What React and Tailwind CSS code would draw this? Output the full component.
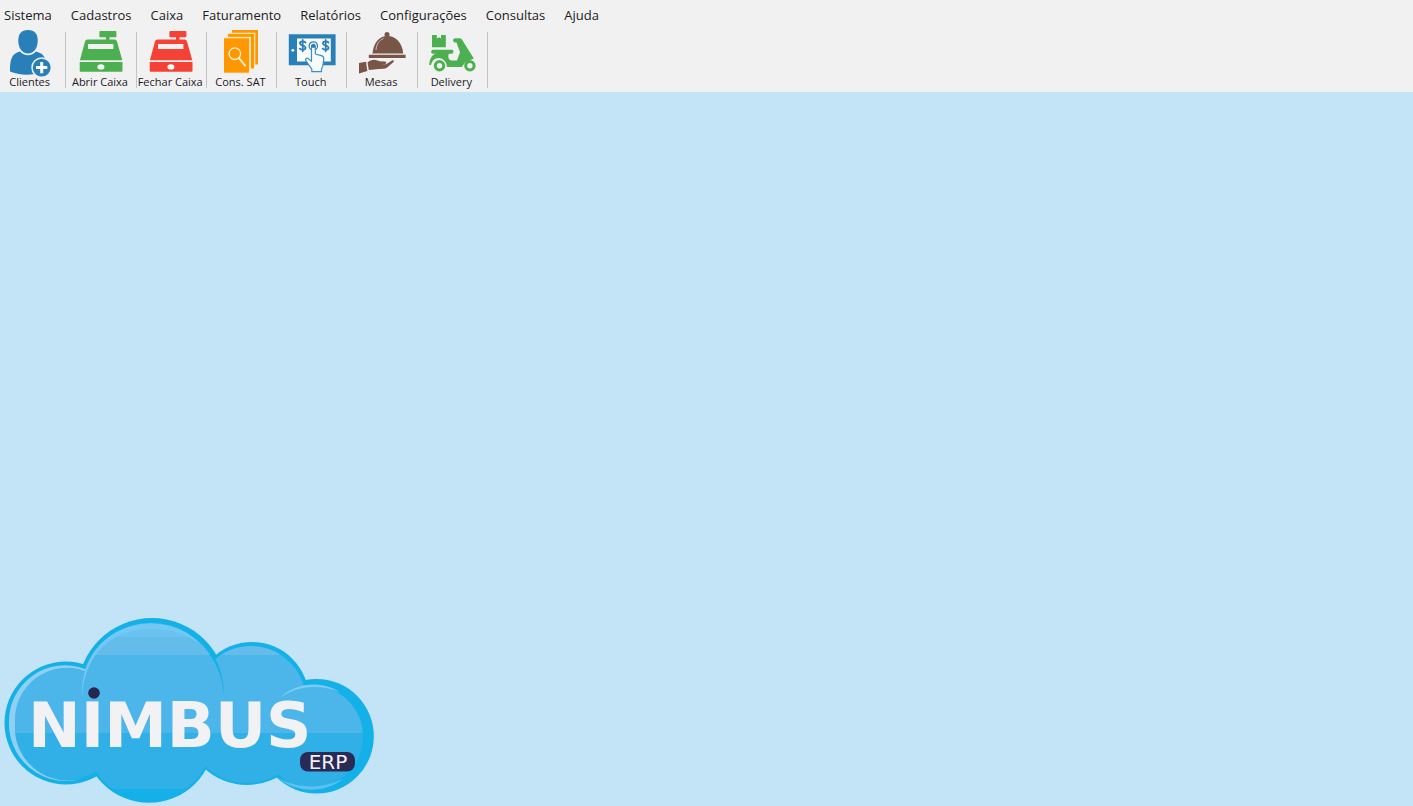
import React from "react";

const menuItems = [
  "Sistema",
  "Cadastros",
  "Caixa",
  "Faturamento",
  "Relatórios",
  "Configurações",
  "Consultas",
  "Ajuda",
];

const Icon = ({ children }) => (
  <svg
    viewBox="0 0 52 48"
    className="h-12 w-[52px] overflow-visible"
    aria-hidden="true"
  >
    {children}
  </svg>
);

const ClientIcon = () => (
  <Icon>
    <g fill="#2980b9">
      <path d="M24 2c-6.500 0-9.700 4-9.700 10.500C14.300 20 18 25.500 24 25.500S33.700 20 33.700 12.500C33.700 6 30.500 2 24 2z" />
      <path d="M16 23.500c4.500 5 11.500 5 16 0 6 1.500 9 4.500 9.500 9.500L31 46C22 47.500 13 46.500 6 43.500c0-11 1-18 10-20z" />
    </g>
    <circle cx="37.700" cy="39.600" r="9.700" fill="#2980b9" stroke="#f1f1f1" strokeWidth="1.500" />
    <path d="M37.700 34v11.200M32.100 39.600h11.200" stroke="#fff" strokeWidth="3" />
  </Icon>
);

const RegisterIcon = ({ color }) => (
  <Icon>
    <g fill={color}>
      <rect x="25.400" y="3" width="17" height="6.300" rx="1" />
      <path d="M32 9h3.500v3H32z" />
      <path
        fillRule="evenodd"
        d="M13.500 11.500h27q2 0 2.500 2L48.300 32.300H5.900L11 13.500q.5-2 2.500-2zM14 16v5h25.400v-5z"
      />
      <path d="M5.700 34h42.800v8.700q0 1-1 1H6.700q-1 0-1-1z" />
    </g>
    <ellipse cx="26.900" cy="38.900" rx="3.500" ry="2.700" fill="#f8fff8" />
  </Icon>
);

const SatIcon = () => (
  <Icon>
    <path d="M18 2h26v34.500H18z" fill="#ff9800" />
    <path d="M14 4.700h27.300v34H14z" fill="#fbe3b2" />
    <path d="M14 6h26v34.500H14z" fill="#ff9800" />
    <path d="M10 8.800h27v34H10z" fill="#fbe3b2" />
    <path d="M10 10.300h25v34.400H10z" fill="#ff9800" />
    <g fill="none" stroke="#fff1d6">
      <circle cx="20.800" cy="25.700" r="5.800" strokeWidth="1.300" />
      <path d="M25 30l6 7.500" strokeWidth="2" strokeLinecap="round" />
    </g>
  </Icon>
);

const TouchIcon = () => (
  <Icon>
    <path d="M3.800 6.300h46.800v31H3.800z" fill="#2980b9" />
    <path d="M12 10.500h33.800v23H12z" fill="#f8fbfd" />
    <circle cx="7.800" cy="22.300" r="1.400" fill="#fff" />
    <g fill="none" stroke="#2980b9" strokeWidth="1.800" strokeLinecap="round">
      <path d="M20.500 14.500c-1.500-1.500-5.500-1.500-5.500.8 0 2.700 5.500 1.700 5.500 4.500 0 2.500-4 2.500-5.800.8M17.700 12v11.300" />
      <path d="M43.500 14.500c-1.500-1.500-5.500-1.500-5.500.8 0 2.700 5.500 1.700 5.500 4.500 0 2.500-4 2.500-5.800.8M40.700 12v11.300" />
      <circle cx="28.300" cy="18" r="4.200" strokeWidth="1.200" />
    </g>
    <path
      d="M26.500 18.500c0-2.800 3.800-2.800 3.800 0V26l6 1.700c2 .6 2.700 1.500 2.500 3.500l-1 7-1.300 2.500v3H26.800v-2.500l-6-8.500c-1-2 1.200-3.500 3-1.800l2.700 2.400z"
      fill="#f8fbfd"
      stroke="#3e8dc3"
      strokeWidth="1.200"
      strokeLinejoin="round"
    />
    <circle cx="28.400" cy="18" r="2" fill="#2980b9" />
  </Icon>
);

const TableIcon = () => (
  <Icon>
    <g fill="#795548">
      <circle cx="32" cy="6.500" r="2.500" />
      <path d="M17.500 25.500C18.500 14.500 24 8 32.500 8S47 14.500 48.300 25.500z" />
      <path d="M13.800 26.700h36.800v3.300H13.800z" />
      <path d="M4 35l7-1.300 1.300 9.300L4 45.500z" />
      <path d="M12.500 34.500c4-3.500 8-3.300 12-1.200l5.500.2c1.800.2 1.800 2.300 0 2.500h-5l6 .3 6-3.800c2-.8 2.500.5 1 2l-5.500 4.800c-3 2.200-7 1.300-11 2l-7.700.8z" />
    </g>
    <path
      d="M21 22c.5-6 3-9.500 7.500-11.500"
      fill="none"
      stroke="#c9b9b2"
      strokeWidth="1"
    />
  </Icon>
);

const DeliveryIcon = () => (
  <Icon>
    <g fill="#4caf50">
      <path d="M7 7h4.800v3.500l2.100-1.200 2.100 1.200V7h4.800v12.200H7z" />
      <path d="M8 21.700h19c2 0 2 4-.5 4H8c-2.400 0-2.400-4 0-4z" />
      <path d="M12 25h12c-1.500 4-.5 7 2.500 7.500h5.500l3-8.200-3.500-9.800h-1.500c-2.500 0-2.500-4.200 0-4.200h4.500c1.600 0 2.400.7 3 2.200l11.300 18-8.300 3.500-3.700 5H22c0-5-4-9-8.500-9-4 0-6.500 3-7.500 7H4.300c0-6 3-10.500 7.700-12z" />
    </g>
    <g fill="#f1f1f1" stroke="#4caf50" strokeWidth="3">
      <circle cx="14.500" cy="37.800" r="4.200" />
      <circle cx="44.900" cy="37.800" r="4.200" />
    </g>
  </Icon>
);

const tools = [
  { label: "Clientes", icon: <ClientIcon /> },
  { label: "Abrir Caixa", icon: <RegisterIcon color="#4caf50" /> },
  { label: "Fechar Caixa", icon: <RegisterIcon color="#f44336" /> },
  { label: "Cons. SAT", icon: <SatIcon /> },
  { label: "Touch", icon: <TouchIcon /> },
  { label: "Mesas", icon: <TableIcon /> },
  { label: "Delivery", icon: <DeliveryIcon /> },
];

const NimbusLogo = () => (
  <svg
    viewBox="0 614 378 192"
    className="h-48 w-[378px]"
    role="img"
    aria-label="Nimbus ERP"
  >
    <defs>
      <clipPath id="cloud-inner">
        <circle cx="66" cy="723" r="57" />
        <circle cx="151" cy="694" r="71" />
        <circle cx="149" cy="737.500" r="63" />
        <circle cx="251" cy="701" r="55" />
        <circle cx="247" cy="723" r="60" />
        <circle cx="312" cy="736.500" r="51" />
      </clipPath>
    </defs>

    {/* contorno da nuvem */}
    <g fill="#14b1e8">
      <circle cx="66" cy="723" r="61.500" />
      <circle cx="152" cy="692.500" r="74.500" />
      <circle cx="149" cy="737.500" r="65.300" />
      <circle cx="252" cy="699" r="57" />
      <circle cx="247" cy="722.500" r="62.500" />
      <circle cx="316.500" cy="736.300" r="57.300" />
    </g>

    {/* faixas internas */}
    <g clipPath="url(#cloud-inner)">
      <path d="M0 614h378v23H0z" fill="#69c2f0" />
      <path d="M0 637h378v18H0z" fill="#64bcea" />
      <path d="M0 655h378v78H0z" fill="#4cb5ea" />
      <path d="M0 733h378v56H0z" fill="#30b0e6" />
      <path d="M0 789h378v17H0z" fill="#14b1e8" />
    </g>

    {/* brilhos */}
    <path
      d="M85 669A56 56 0 0 0 9 723a57 57 0 0 0 86 50A53 53 0 0 1 15 723a52 52 0 0 1 70-52z"
      fill="#8fd0f2"
    />
    <path
      d="M82 698C80 654 110 624 150 624c22 0 39 8 50 20-17-12-30-15-50-15-38 0-66 25-68 69z"
      fill="#74c9f3"
    />
    <path
      d="M213 655c8 12 11 27 11 43-1-17-5-30-14-43z"
      fill="#14b1e8"
    />
    <path d="M280 698c15-15 40-18 60-6-20-8-43-7-60 6z" fill="#7bcbf3" />
    <path d="M278 778c18 15 46 16 65 1-21 10-44 10-65-1z" fill="#5cc1ef" />

    <text
      x="28"
      y="747"
      fontSize="63"
      fontWeight="700"
      fill="#f2f2f4"
      className="font-['DejaVu_Sans',sans-serif]"
    >
      NIMBUS
    </text>
    <circle cx="94" cy="693" r="5.800" fill="#26264f" />
    <rect x="300" y="752" width="55" height="19.500" rx="8" fill="#2a2a57" />
    <text
      x="328"
      y="769"
      fontSize="20"
      textAnchor="middle"
      fill="#f2f2f4"
      className="font-['DejaVu_Sans',sans-serif]"
    >
      ERP
    </text>
  </svg>
);

const App = () => {
  return (
    <div className="flex min-h-screen flex-col bg-[#c3e4f6] font-['Open_Sans','Noto_Sans',sans-serif] text-[#1b1b22]">
      <header className="overflow-hidden bg-[#f1f1f1] pb-1">
        <nav className="flex h-7 items-center gap-[19px] px-1 pt-0.5 text-[13px] leading-5">
          {menuItems.map((item) => (
            <button key={item} type="button">
              {item}
            </button>
          ))}
        </nav>

        {/* barra de ferramentas */}
        <div className="-ml-1 grid w-[492px] grid-cols-7">
          {tools.map((tool) => (
            <div key={tool.label} className="flex items-end">
              <button
                type="button"
                className="flex min-w-0 flex-1 flex-col items-center pr-0.5 text-[11px] leading-3"
              >
                {tool.icon}
                <span className="whitespace-nowrap">{tool.label}</span>
              </button>
              <span className="h-14 w-px bg-[#c4c4c4]" />
            </div>
          ))}
        </div>
      </header>

      <main className="flex flex-1 items-end">
        <NimbusLogo />
      </main>
    </div>
  );
};

export default App;
